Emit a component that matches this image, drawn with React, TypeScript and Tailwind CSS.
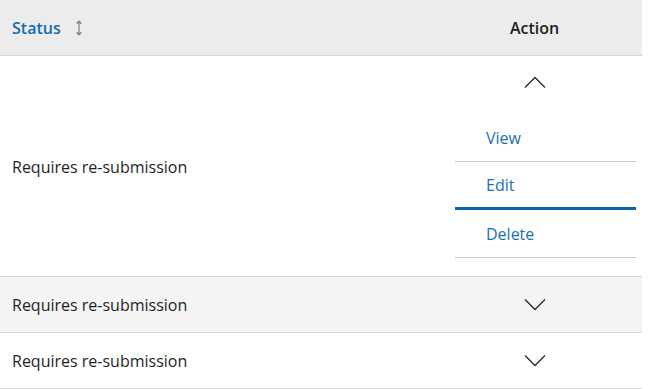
function SortIcon() {
  return (
    <svg width="8" height="16" viewBox="0 0 8 16" fill="none" className="ml-[14px]">
      <path d="M4 2v12" stroke="#8a8a8a" strokeWidth="1.3" />
      <path d="M1.5 3.5L4 1.2 6.5 3.5M1.5 12.5L4 14.8 6.5 12.5" stroke="#8a8a8a" strokeWidth="1.3" fill="#8a8a8a" />
    </svg>
  );
}

function Chevron({ up = false }: { up?: boolean }) {
  return (
    <svg width="22" height="12" viewBox="0 0 22 12" fill="none">
      <path
        d={up ? "M1 11.5L11 1.5l10 10" : "M1 0.5l10 10 10-10"}
        stroke="#2a2a2a"
        strokeWidth="1.3"
      />
    </svg>
  );
}

const rows = [
  { status: "Requires re-submission", open: true },
  { status: "Requires re-submission", open: false },
  { status: "Requires re-submission", open: false },
];

export default function App() {
  return (
    <div
      className="w-[653px] h-[389px] bg-white text-[16px] text-[#1f1f1f]"
      style={{ fontFamily: '"Open Sans", "Liberation Sans", sans-serif' }}
    >
      <div className="w-[642px]">
        <div className="flex h-[56px] bg-[#ececec] border-b border-[#d6d6d6]">
          <div className="w-[427px] flex items-center pl-[12px] pt-[1px]">
            <span className="font-semibold text-[#116cb1]">Status</span>
            <SortIcon />
          </div>
          <div className="flex-1 flex items-center justify-center font-semibold pt-[1px]">Action</div>
        </div>
        {rows.map((r, i) => (
          <div
            key={i}
            className={`flex border-b border-[#d6d6d6] ${i === 1 ? "bg-[#f4f4f4]" : "bg-white"} ${r.open ? "" : "h-[56px]"}`}
          >
            <div className="w-[427px] flex items-center pl-[12px] pt-[1px]">{r.status}</div>
            {r.open ? (
              <div className="flex-1 flex flex-col">
                <div className="flex justify-center pt-[20px]">
                  <Chevron up />
                </div>
                <div className="mt-[26px] mb-[18px] ml-[28px] mr-[6px] text-[#1a6fb3]">
                  <div className="h-[48px] flex items-center pl-[31px] pt-[1px] border-b border-[#c9c9ce]">View</div>
                  <div className="h-[48px] flex items-center pl-[31px] pt-[1px] border-b-[3px] border-[#0b65ad]">Edit</div>
                  <div className="h-[48px] flex items-center pl-[31px] pt-[1px] border-b border-[#c9c9ce]">Delete</div>
                </div>
              </div>
            ) : (
              <div className="flex-1 flex items-center justify-center">
                <Chevron />
              </div>
            )}
          </div>
        ))}
      </div>
    </div>
  );
}
